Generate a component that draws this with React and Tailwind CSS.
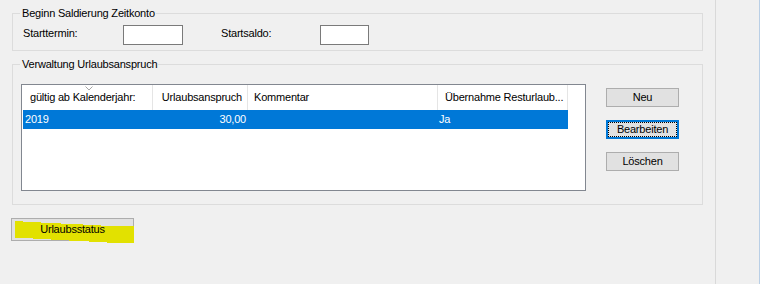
const columns = [
  { title: "gültig ab Kalenderjahr:", width: "w-[130px]", head: "pl-[7px]", cell: "pl-[2px]" },
  { title: "Urlaubsanspruch", width: "w-[95px]", head: "justify-end pr-[5px]", cell: "justify-end pr-[2px]" },
  { title: "Kommentar", width: "w-[190px]", head: "pl-[6px]", cell: "pl-[6px]" },
  { title: "Übernahme Resturlaub...", width: "w-[130px]", head: "pl-[7px]", cell: "pl-[1px]" },
];

const rows = [["2019", "30,00", "", "Ja"]];

function WinButton({ children, focused }) {
  if (focused) {
    return (
      <div className="flex h-[19px] w-[73px] border-2 border-[#0078d7] bg-[#e1e1e1]">
        <div className="flex flex-1 items-center justify-center border border-dotted border-black">
          {children}
        </div>
      </div>
    );
  }
  return (
    <div className="flex h-[19px] w-[73px] items-center justify-center border border-[#adadad] bg-[#e1e1e1]">
      {children}
    </div>
  );
}

export default function App() {
  return (
    <div className="flex h-[284px] w-[760px] overflow-hidden bg-[#f0f0f0] font-['Liberation_Sans',Arial,sans-serif] text-[11px] leading-[13px] tracking-[-0.2px] text-black">
      <div className="w-[716px] shrink-0 border-r border-[#d9d9d9] pl-[11px]">
        {/* Beginn Saldierung */}
        <fieldset className="ml-[1px] mt-[7px] h-[44px] w-[691px] border border-[#dcdcdc]">
          <legend className="ml-[7px] pl-[2px] pr-[1px]">Beginn Saldierung Zeitkonto</legend>
          <div className="flex items-start pl-[10px] pt-[5px]">
            <span className="mt-[2px] w-[100px]">Starttermin:</span>
            <div className="h-[20px] w-[60px] border border-[#7a7a7a] bg-white" />
            <span className="ml-[38px] mt-[2px] w-[99px]">Startsaldo:</span>
            <div className="h-[20px] w-[49px] border border-[#7a7a7a] bg-white" />
          </div>
        </fieldset>

        {/* Verwaltung Urlaubsanspruch */}
        <fieldset className="ml-[1px] mt-[7px] h-[147px] w-[691px] border border-[#dcdcdc]">
          <legend className="ml-[7px] pl-[2px] pr-[1px]">Verwaltung Urlaubsanspruch</legend>
          <div className="flex items-start pl-[8px] pt-[13px]">
            <div className="h-[107px] w-[565px] border border-[#828790] bg-white pl-[1px]">
              <div className="flex h-[25px]">
                {columns.map((c, i) => (
                  <div key={c.title} className={`relative flex items-center whitespace-nowrap border-r border-[#e5e5e5] ${c.width} ${c.head}`}>
                    {i === 0 && (
                      <svg className="absolute left-[62px] top-[1px]" width="8" height="5" viewBox="0 0 8 5">
                        <polyline points="0.5,0.5 4,4 7.5,0.5" fill="none" stroke="#a6a6a6" strokeWidth="1" />
                      </svg>
                    )}
                    {c.title}
                  </div>
                ))}
              </div>
              {rows.map((r) => (
                <div key={r[0]} className="flex h-[19px] w-[545px] bg-[#0078d7] text-white">
                  {columns.map((c, i) => (
                    <div key={c.title} className={`flex items-center whitespace-nowrap ${c.width} ${c.cell}`}>
                      {r[i]}
                    </div>
                  ))}
                </div>
              ))}
            </div>
            <div className="ml-[20px] mt-[4px] flex flex-col gap-[13px]">
              <WinButton>Neu</WinButton>
              <WinButton focused>Bearbeiten</WinButton>
              <WinButton>Löschen</WinButton>
            </div>
          </div>
        </fieldset>

        {/* Urlaubsstatus, marked with a highlighter */}
        <div className="relative mt-[13px] flex h-[23px] w-[123px] items-center justify-center border border-[#adadad] bg-[#e1e1e1]">
          <svg className="pointer-events-none absolute -left-px -top-px overflow-visible" width="124" height="26" viewBox="0 0 124 26">
            <polygon
              points="4,3 12,3 12,4 30,4 30,5 50,5 50,6 72,6 72,7 90,7 90,8 123,8 123,25 96,25 96,24 78,24 78,23 58,23 58,22 40,22 40,21 22,21 22,20 4,20"
              fill="#e2e100"
            />
          </svg>
          <span className="relative">Urlaubsstatus</span>
        </div>
      </div>
      <div className="flex-1" />
      <div className="w-px bg-[#b9cfe6]" />
    </div>
  );
}
